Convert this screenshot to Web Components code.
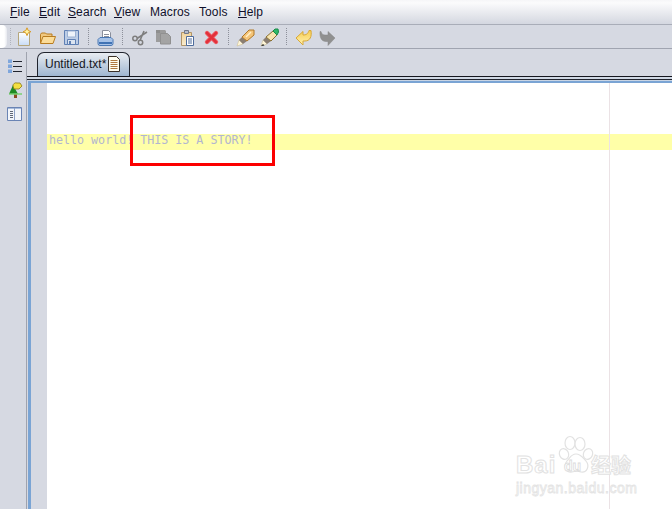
<!DOCTYPE html>
<html>
<head>
<meta charset="utf-8">
<style>
html, body { margin: 0; padding: 0; height: 100%; overflow: hidden; background: #d6d9e2; }
body { font-family: "Liberation Sans", Arial, sans-serif; }
</style>
</head>
<body>
<np-window>
    <np-menubar slot="menu"></np-menubar>
    <np-toolbar slot="tools"></np-toolbar>
    <np-sidebar slot="side"></np-sidebar>
    <np-tabs slot="tabs"></np-tabs>
    <np-editor slot="editor"></np-editor>
</np-window>
<script>
const penBase = `<path d="M1 19l2-6 4 4z" fill="#fff6d8" stroke="#c8b888" stroke-width="0.500"/><path d="M3 13l3-3 5 4-4 3z" fill="#8a7e72"/>`;
const icons = {
    newfile: `<defs><linearGradient id="gn" x2="0" y2="1"><stop offset="0" stop-color="#fff"/><stop offset="1" stop-color="#c9dcf5"/></linearGradient></defs>
        <path d="M4.500 5.500h11v13h-11z" fill="url(#gn)" stroke="#b5a67c"/>
        <path d="M13 .8l1.200 2.700 2.700 1.200-2.700 1.200-1.200 2.700-1.200-2.700-2.700-1.200 2.700-1.200z" fill="#fff3a0" stroke="#d89a28"/>`,
    open: `<path d="M2.500 16V7.500l1-1.500h4l1 1h5.500v3" fill="#f0c880" stroke="#b87c20"/>
        <path d="M2.500 16.500l2.500-7h12.500l-2.500 7z" fill="#fbdc98" stroke="#b87c20"/>`,
    save: `<path d="M2.500 3.500h14v14h-14z" fill="#bccde6" stroke="#5f80b4"/>
        <path d="M5.500 4h8v6h-8z" fill="#eef3fa" stroke="#9cb2d2"/>
        <path d="M5.500 12.500h8v5h-8z" fill="#dbe4f0" stroke="#5f80b4"/>
        <path d="M7 14h2v3h-2z" fill="#5f80b4"/>`,
    print: `<path d="M6.500 3.500h6l2 2v6h-8z" fill="#fff" stroke="#8a8f9c"/>
        <path d="M8 7.500h5M8 9.500h5" stroke="#8a8f9c"/>
        <path d="M4 10.500h11l2 2v4a2 2 0 0 1-2 2h-11a2 2 0 0 1-2-2v-4z" fill="#a6c2e8" stroke="#4a78b4"/>
        <path d="M3 15h13v2h-13z" fill="#3f72b4"/>`,
    cut: `<path d="M7 11.500L17 5M10 13.500L14 4" stroke="#7e7e7e" stroke-width="1.600" fill="none"/>
        <circle cx="5" cy="11.500" r="2.200" fill="none" stroke="#7e7e7e" stroke-width="1.500"/>
        <circle cx="10.500" cy="15.500" r="2.200" fill="none" stroke="#7e7e7e" stroke-width="1.500"/>`,
    copy: `<path d="M2 3h9l1 1v11h-10z" fill="#9c9c9c"/>
        <path d="M6.500 6.500h7l3 3v7.500h-10z" fill="#a4a4a4" stroke="#909090"/>
        <path d="M2 3h4v3h-4z" fill="#8e8e8e"/>`,
    paste: `<defs><linearGradient id="gp" x2="0" y2="1"><stop offset="0" stop-color="#f0d49c"/><stop offset="1" stop-color="#f8ecd0"/></linearGradient></defs>
        <path d="M3.500 5.500h10v13h-10z" fill="url(#gp)" stroke="#b09468"/>
        <path d="M6.500 3.500h4v3h-4z" fill="#b4bccc" stroke="#707888"/>
        <path d="M8.500 9.500h7v9h-7z" fill="#fff" stroke="#4e6c9c"/>
        <path d="M10 12h4M10 14h4M10 16h4" stroke="#4e6c9c"/>`,
    del: `<path d="M5 6l9 9M14 6l-9 9" stroke="#ee6068" stroke-width="4.400" stroke-linecap="round"/>
        <path d="M5 6l9 9M14 6l-9 9" stroke="#e2323c" stroke-width="2.600" stroke-linecap="round"/>`,
    pen: `${penBase}<path d="M6 10l7-7h5v5l-7 6z" fill="#f4c478" stroke="#b07828"/><path d="M10 10l5-5" stroke="#fff0c8" stroke-width="1.500"/>`,
    pen2: `${penBase}<path d="M6 10l7-6 4 4-6 6z" fill="#f6e4b0" stroke="#8a7030"/><path d="M13 4l2-2h3l.5 3-1.500 3z" fill="#2fb868" stroke="#1a8a48"/><path d="M1 19l2-2 1.500 1.500z" fill="#181818"/>`,
    undo: `<defs><linearGradient id="gu" x2="0" y2="1"><stop offset="0" stop-color="#f6cc50"/><stop offset="1" stop-color="#fff2b0"/></linearGradient></defs>
        <path d="M2 11l7-6.500v3.500c3 0 5-1 6-4.500h2c1 6-1 10.500-6 10.500h-2v4z" fill="url(#gu)" stroke="#d8a838"/>`,
    redo: `<path d="M17 11l-7-6.500v3.500h-3c-2 0-3.500-1-4-3.500h-1c-.5 6 1.500 10 6 10h2v4z" fill="#909090" stroke="#868686" stroke-width="0.500"/>`
};

class NpWindow extends HTMLElement {
    constructor() {
        super();
        this.attachShadow({ mode: 'open' });
        this.shadowRoot.innerHTML = `
<style>
:host { display: flex; flex-direction: column; width: 672px; height: 509px; overflow: hidden; position: relative; }
.body { flex: 1; display: flex; min-height: 0; }
.main { flex: 1; display: flex; flex-direction: column; min-width: 0; }
.mark { position: absolute; left: 515px; top: 430px; width: 125px; height: 70px; pointer-events: none; }
.mark span { position: absolute; color: #fff; -webkit-text-stroke: 1px #e2e2e2; white-space: nowrap; }
.mark .bai { left: 1px; top: 21px; font: bold 24px/28px "Liberation Sans", sans-serif; letter-spacing: 1px; }
.mark .cn { left: 76px; top: 20px; font: bold 20px/30px "Noto Sans CJK SC", sans-serif; }
.mark .url { left: 1px; top: 49px; font: 14px/18px "Liberation Sans", sans-serif; -webkit-text-stroke: 0.8px #e4e4e4; letter-spacing: 0.5px; }
.mark svg { position: absolute; left: 40px; top: 4px; }
.mark .du { left: 49px; top: 27px; font: bold 14px/18px "Liberation Sans", sans-serif; -webkit-text-stroke: 0.8px #dcdcdc; z-index: 1; }
.callout { position: absolute; left: 130px; top: 115px; width: 145px; height: 51px; box-sizing: border-box; border: 3px solid #fc0000; }
</style>
<slot name="menu"></slot>
<slot name="tools"></slot>
<div class="body">
    <slot name="side"></slot>
    <div class="main">
        <slot name="tabs"></slot>
        <slot name="editor"></slot>
    </div>
</div>
<div class="callout"></div>
<div class="mark">
    <svg width="44" height="44" viewBox="0 0 44 44" fill="#fff" stroke="#e2e2e2" stroke-width="1.200">
        <ellipse cx="9" cy="20" rx="4.500" ry="5.500" transform="rotate(-25 9 20)"/>
        <ellipse cx="15" cy="9" rx="5" ry="6.500"/>
        <ellipse cx="25" cy="10" rx="5" ry="6.500"/>
        <ellipse cx="33" cy="20" rx="4.500" ry="5.500" transform="rotate(25 33 20)"/>
        <path d="M21 20c5 0 7 4 10 7 4 5 1 12-5 11-3-1-6-1-9 0-6 1-9-6-5-11 3-3 4-7 9-7z"/>
    </svg>
    <span class="du">du</span>
    <span class="bai">Bai</span><span class="cn">经验</span>
    <span class="url">jingyan.baidu.com</span>
</div>`;
    }
}
customElements.define('np-window', NpWindow);

class NpMenubar extends HTMLElement {
    constructor() {
        super();
        this.attachShadow({ mode: 'open' });
        // column widths copied from the reference, Tahoma is wider than Liberation here
        const items = [['F', 'ile', 29], ['E', 'dit', 29], ['S', 'earch', 46], ['V', 'iew', 36], ['', 'Macros', 49], ['', 'Tools', 39], ['H', 'elp', 34]];
        this.shadowRoot.innerHTML = `
<style>
:host { display: flex; height: 24px; box-sizing: border-box; padding: 4px 0 0 10px; background: linear-gradient(#f6f6f8, #fbfbfc 12%, #d4d7e0); font-size: 12px; line-height: 17px; color: #10102a; }
span { display: block; flex: none; letter-spacing: 0.1px; }
u { text-underline-offset: 1px; }
</style>
${items.map(i => `<span style="width:${i[2]}px">${i[0] ? `<u>${i[0]}</u>` : ''}${i[1]}</span>`).join('')}`;
    }
}
customElements.define('np-menubar', NpMenubar);

class NpToolbar extends HTMLElement {
    constructor() {
        super();
        this.attachShadow({ mode: 'open' });
        const groups = [
            ['newfile', 'open', 'save'],
            ['print'],
            ['cut', 'copy', 'paste', 'del'],
            ['pen', 'pen2'],
            ['undo', 'redo']
        ];
        this.shadowRoot.innerHTML = `
<style>
:host { display: flex; align-items: flex-start; height: 25px; box-sizing: border-box; border-top: 1px solid #a9adb8; border-bottom: 1px solid #a0a4b0; background: #d6d9e2; position: relative; padding: 2px 0 0 12px; }
.grip { position: absolute; left: 0; top: 0; bottom: 0; width: 7px; background: linear-gradient(90deg, #fff 60%, #e6e8ee); border-radius: 0 5px 5px 0; }
.grip2 { position: absolute; left: 10px; top: 3px; bottom: 3px; border-left: 1px dotted #b0b3bc; }
.group { display: flex; }
.slot { width: 24px; display: flex; justify-content: center; }
.sep { width: 6px; height: 17px; margin: 1px 0 0 4px; border-left: 1px dotted #8d909a; box-sizing: border-box; flex: none; }
svg { display: block; }
</style>
<div class="grip"></div><div class="grip2"></div>
${groups.map(g => `<div class="group">${g.map(i => `<div class="slot"><svg width="20" height="20" viewBox="0 0 20 20">${icons[i]}</svg></div>`).join('')}</div>`).join('<div class="sep"></div>')}`;
    }
}
customElements.define('np-toolbar', NpToolbar);

class NpSidebar extends HTMLElement {
    constructor() {
        super();
        this.attachShadow({ mode: 'open' });
        this.shadowRoot.innerHTML = `
<style>
:host { display: flex; flex-direction: column; align-items: flex-start; width: 27px; box-sizing: border-box; padding: 10px 0 0 8px; flex: none; background: #d6d9e2; position: relative; }
:host::after { content: ""; position: absolute; right: 0; top: 3px; bottom: 0; width: 1px; background: #9fa3ae; }
svg { display: block; }
</style>
<svg width="14" height="15" viewBox="0 0 14 15">
    <path d="M0 0.500h4v3.500h-4zM0 5.500h4v3.500h-4zM0 10.500h4v3.500h-4z" fill="#7ea6dc"/>
    <path d="M5 2.500h9M5 7.500h9M5 12.500h9" stroke="#20242e"/>
</svg>
<svg width="15" height="16" viewBox="0 0 15 16" style="margin-top:8px">
    <path d="M1 12L5 3l5 9z" fill="#1f8a24"/>
    <path d="M6 12h3v4h-3z" fill="#8a4a20"/>
    <path d="M5 4a3 3 0 0 1 4-3h3l2 3-3 3h-5z" fill="#f4e040" stroke="#8a7818" stroke-width="0.800"/>
    <path d="M1 12h13" stroke="#78d070" stroke-width="1.500"/>
</svg>
<svg width="15" height="14" viewBox="0 0 15 14" style="margin:9px 0 0 -1px">
    <path d="M.500.500h14v13h-14z" fill="#f2f5fa" stroke="#6a84b4"/>
    <path d="M1 1h13v1h-13z" fill="#a8bcdc"/>
    <path d="M7.500 1v12" stroke="#8ea2c6"/>
    <path d="M3 4.500h3M3 6.500h3M3 8.500h3M3 10.500h3" stroke="#606878"/>
</svg>`;
    }
}
customElements.define('np-sidebar', NpSidebar);

class NpTabs extends HTMLElement {
    constructor() {
        super();
        this.attachShadow({ mode: 'open' });
        this.shadowRoot.innerHTML = `
<style>
:host { display: flex; align-items: flex-end; height: 28px; box-sizing: border-box; padding-left: 10px; border-bottom: 1px solid #14161e; background: #d6d9e2; flex: none; }
.tab { display: flex; align-items: center; gap: 2px; height: 24px; box-sizing: border-box; padding: 0 0 2px 7px; width: 93px; border: 1px solid #20242e; border-bottom: none; border-radius: 7px 7px 0 0; background: linear-gradient(#e8ecf2, #9fb6d0); font-size: 12px; color: #14161e; }
svg { display: block; }
</style>
<div class="tab"><span>Untitled.txt*</span>
<svg width="12" height="16" viewBox="0 0 12 16">
    <path d="M.500.500h8l3 3v12h-11z" fill="#fffdf0" stroke="#3a3028"/>
    <path d="M2.500 4.500h7M2.500 6.500h7M2.500 8.500h7M2.500 10.500h7M2.500 12.500h7" stroke="#b07840"/>
</svg></div>`;
    }
}
customElements.define('np-tabs', NpTabs);

class NpEditor extends HTMLElement {
    constructor() {
        super();
        this.attachShadow({ mode: 'open' });
        this.shadowRoot.innerHTML = `
<style>
:host { display: flex; flex-direction: column; flex: 1; min-height: 0; background: #d6d9e2; }
.stripes { height: 4px; flex: none; background: linear-gradient(#d0d8e4 0 2px, #20242e 2px 3px, #c8d4e4 3px); }
.frame { flex: 1; display: flex; min-height: 0; margin-left: 1px; border-top: 2px solid #7aa4d4; border-left: 3px solid #7aa4d4; background: #fff; }
.gutter { width: 16px; background: #d6d9e2; flex: none; }
.page { flex: 1; padding-top: 51px; min-width: 0; position: relative; }
.line { height: 16px; background: #ffffa8; font: 11.670px/13px "DejaVu Sans Mono", monospace; color: #b2b6d0; padding-left: 2px; white-space: pre; }
.edge { position: absolute; left: 562px; top: 0; bottom: 0; width: 1px; background: #ebe2e5; }
</style>
<div class="stripes"></div>
<div class="frame">
    <div class="gutter"></div>
    <div class="page"><div class="line">hello world! THIS IS A STORY!</div><div class="edge"></div></div>
</div>`;
    }
}
customElements.define('np-editor', NpEditor);
</script>
</body>
</html>
